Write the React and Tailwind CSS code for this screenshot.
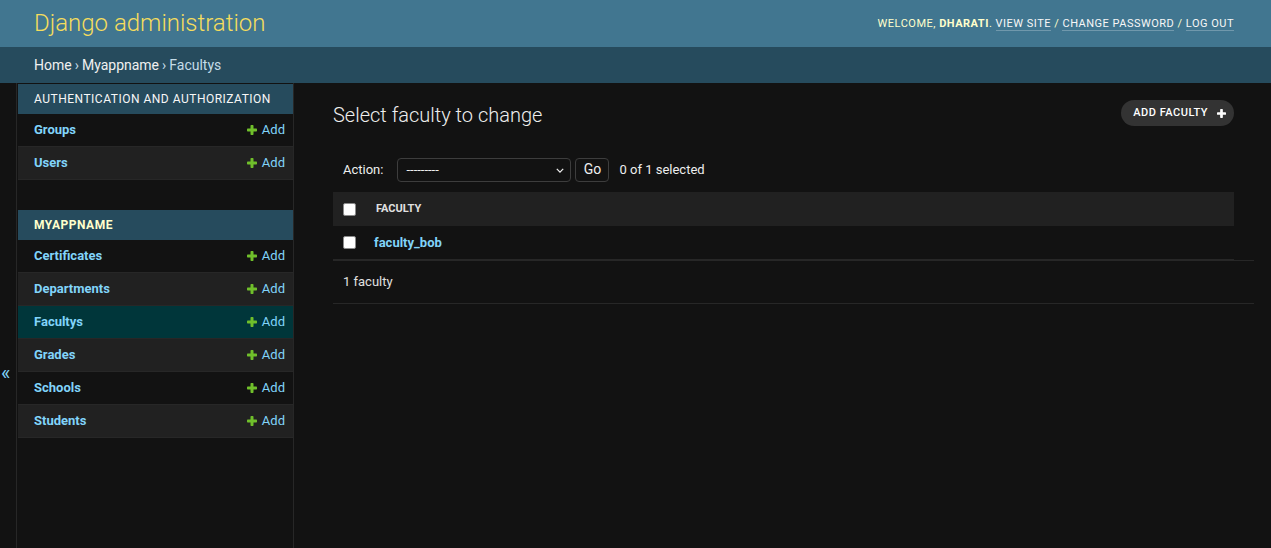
import React from "react";

const PlusIcon = ({ color = "#70bf2b", className = "" }) => (
  <svg viewBox="0 0 10 10" className={className} aria-hidden="true">
    <rect x="3.5" y="0" width="3" height="10" rx="0.7" fill={color} />
    <rect x="0" y="3.5" width="10" height="3" rx="0.7" fill={color} />
  </svg>
);

const Checkbox = () => (
  <span className="inline-block w-[13px] h-[13px] rounded-[2px] bg-white border border-[#8a8a8a]" />
);

const SideRow = ({ name, bg }) => (
  <div className={`flex items-center justify-between h-[33px] border-b border-[#272727] pl-4 pr-2 ${bg}`}>
    <a className="text-[13px] font-bold text-[#81d4fa]">{name}</a>
    <a className="flex items-center gap-[5px] text-[13px] text-[#81d4fa]">
      <PlusIcon className="w-[10px] h-[10px]" />
      Add
    </a>
  </div>
);

export default function App() {
  const appRows = [
    ["Certificates", "bg-[#121212]"],
    ["Departments", "bg-[#212121]"],
    ["Facultys", "bg-[#00363a]"],
    ["Grades", "bg-[#212121]"],
    ["Schools", "bg-[#121212]"],
    ["Students", "bg-[#212121]"],
  ];
  return (
    <div className="min-h-screen bg-[#121212] text-[#eeeeee] font-['Roboto','Liberation_Sans',sans-serif] flex flex-col">
      {/* Header */}
      <div className="h-[47px] bg-[#417690] flex items-center justify-between pl-[34px] pr-[37px]">
        <div className="text-[24px] font-light text-[#f5dd5d] leading-[28px] pb-[2px]">
          Django administration
        </div>
        <div className="text-[11px] uppercase tracking-[0.5px] text-[#ffffcc] leading-[14px]">
          Welcome, <strong className="font-bold">Dharati</strong>.{" "}
          <a className="text-[#f7f7f7] border-b border-[rgba(255,255,255,0.25)]">View site</a> /{" "}
          <a className="text-[#f7f7f7] border-b border-[rgba(255,255,255,0.25)]">Change password</a> /{" "}
          <a className="text-[#f7f7f7] border-b border-[rgba(255,255,255,0.25)]">Log out</a>
        </div>
      </div>
      {/* Breadcrumbs */}
      <div className="h-[36px] bg-[#264b5d] flex items-center pl-[34px] text-[14px] text-[#c4dce8]">
        <a className="text-[#f0f0f0]">Home</a>
        <span className="mx-[3px]">›</span>
        <a className="text-[#f0f0f0]">Myappname</a>
        <span className="mx-[3px]">›</span>
        <span>Facultys</span>
      </div>
      {/* Main */}
      <div className="flex flex-1">
        <div className="w-[17px] shrink-0 border-r border-[#272727] pl-px pt-[280px]">
          <span className="block text-[20px] leading-[20px] text-[#81d4fa]">«</span>
        </div>
        <div className="w-[277px] shrink-0 border-r border-[#272727] pl-px pt-px">
          <div className="mb-[30px]">
            <div className="h-[30px] bg-[#264b5d] flex items-center pl-4 text-[12px] uppercase tracking-[0.5px] text-[#f7f7f7]">
              Authentication and Authorization
            </div>
            <SideRow name="Groups" bg="bg-[#121212]" />
            <SideRow name="Users" bg="bg-[#212121]" />
          </div>
          <div>
            <div className="h-[30px] bg-[#264b5d] flex items-center pl-4 text-[12px] uppercase tracking-[0.5px] font-bold text-[#ffffcc]">
              Myappname
            </div>
            {appRows.map(([n, b]) => (
              <SideRow key={n} name={n} bg={b} />
            ))}
          </div>
        </div>
        {/* Content */}
        <div className="flex-1 min-w-0 pl-[39px] pr-[37px] pt-[20px]">
          <div className="flex items-start justify-between">
            <h1 className="text-[20px] font-light leading-[24px] text-[#eeeeee]">Select faculty to change</h1>
            <a className="mt-[-3px] h-[26px] flex items-center gap-[9px] pl-[12px] pr-[8px] rounded-full bg-[#333333] text-[11px] font-medium uppercase tracking-[0.5px] text-white">
              Add faculty
              <PlusIcon color="#ffffff" className="w-[9px] h-[9px]" />
            </a>
          </div>
          <div className="mt-[20px] h-[45px] flex items-center px-[10px] text-[13px] text-[#eeeeee]">
            <span>Action:</span>
            <div className="ml-[14px] relative w-[174px] h-[24px] border border-[#3d3d3d] rounded-[4px] bg-[#121212] flex items-center pl-[8px]">
              <span className="text-[13px]">---------</span>
              <svg viewBox="0 0 10 6" className="absolute right-[6px] top-[9px] w-[8px] h-[5px]">
                <path d="M1 1l4 4 4-4" stroke="#eeeeee" strokeWidth="1.6" fill="none" />
              </svg>
            </div>
            <div className="ml-[4px] w-[34px] h-[24px] border border-[#3d3d3d] rounded-[4px] flex items-center justify-center text-[14px]">
              Go
            </div>
            <span className="ml-[10px]">0 of 1 selected</span>
          </div>
          <div className="h-[34px] bg-[#212121] flex items-center pl-[10px]">
            <Checkbox />
            <span className="ml-[20px] text-[11px] font-bold uppercase text-[#e0e0e0]">Faculty</span>
          </div>
          <div className="h-[34px] border-b border-[#272727] flex items-center pl-[10px]">
            <Checkbox />
            <a className="ml-[18px] text-[13px] font-bold text-[#81d4fa]">faculty_bob</a>
          </div>
          <div className="mr-[-20px] border-t border-b border-[#272727] h-[44px] flex items-center pl-[10px] text-[13px] text-[#e0e0e0]">
            1 faculty
          </div>
        </div>
      </div>
    </div>
  );
}
